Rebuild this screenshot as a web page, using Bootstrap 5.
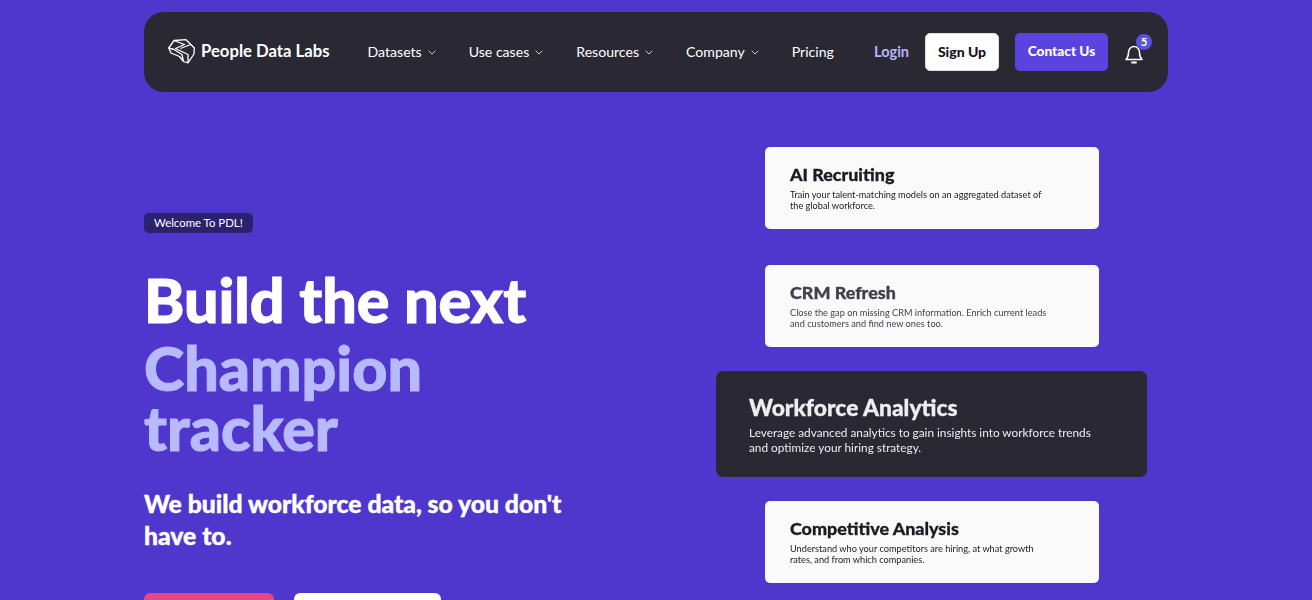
<!DOCTYPE html>
<html lang="en">
<head>
<meta charset="utf-8">
<title>People Data Labs</title>
<link href="https://cdn.jsdelivr.net/npm/bootstrap@5.3.0/dist/css/bootstrap.min.css" rel="stylesheet">
<style>
html,body{height:100%;overflow:hidden}
body{background:#4f36cc;font-family:Lato,"Liberation Sans",sans-serif;color:#fff}
.shell{width:1024px;margin:0 auto;padding-top:12px}
.topbar{height:80px;background:#2a2833;border-radius:20px;padding:0 21px 0 24px}
.brand-name{font-size:16.7px;font-weight:700;color:#fff;margin-left:-2px;padding-bottom:1px}
.menu-link{font-size:14.1px;color:#fff;text-decoration:none;display:inline-flex;align-items:center;gap:6px;padding-bottom:1px}
.menu-link svg{display:block;margin-top:2px}
.login-link{font-size:14.5px;font-weight:700;color:#b4b6ff;text-decoration:none;padding-bottom:1px}
.btn-signup{background:#fff;color:#14121c;font-size:14px;font-weight:900;padding:0 0 2px;width:74px;height:38px;border-radius:5px;border:1px solid #ddd}
.btn-contact{background:#5b43e0;color:#fff;font-size:13.7px;font-weight:900;padding:0 0 2px;width:93px;height:38px;border-radius:5px;border:0}
.bell-wrap{width:22px;height:24px;margin-left:17px}
.bell-count{top:-6px;left:11px;width:16px;height:16px;border-radius:50%;background:#5b53e0;font-size:11.5px;font-weight:700;line-height:16px;text-align:center;color:#fff}
.hero-left{width:572px;padding-top:117px}
.welcome{background:#2a226f;font-size:11.4px;font-weight:400;padding:0 10px;height:20px;line-height:20px;border-radius:5px;color:#fff}
.hero-title{font-size:61px;font-weight:900;line-height:60px;margin:37px 0 0;color:#fff;-webkit-text-stroke:1px currentColor}
.hero-accent{color:#b8baff;display:block;width:340px;margin-top:8px}
.hero-sub{font-size:24.7px;font-weight:900;line-height:32px;margin:30px 0 0;width:440px;-webkit-text-stroke:.4px currentColor}
.hero-actions{margin-top:41px;gap:20px}
.cta-pink{background:#e2498a;width:130px;height:48px;border-radius:6px;border:0}
.cta-white{background:#fff;width:147px;height:48px;border-radius:6px;border:0}
.hero-right{width:431px;padding-top:55px}
.use-card{width:334px;height:82px;background:#fafafa;border-radius:5px;padding:17px 25px 0;border:0;color:#1c1a24;will-change:transform}
.use-card h3{font-size:17.9px;font-weight:900;line-height:20px;margin:0 0 5px;color:inherit;-webkit-text-stroke:.3px currentColor}
.use-card p{font-size:9.2px;line-height:11px;margin:0;width:262px;color:inherit}
.use-card.dim{color:#413f4b}
.use-card.active{width:431px;height:106px;background:#2a2833;border-radius:7px;padding:24px 33px 0;color:#eee}
.use-card.active h3{font-size:22.800px;line-height:24px;margin:0 0 6px}
.use-card.active p{font-size:11.8px;line-height:15px;width:360px}
.gap-big{margin-bottom:36px}
.gap-small{margin-bottom:24px}
</style>
</head>
<body>
<div class="shell">
  <nav class="topbar d-flex align-items-center">
    <a class="d-flex align-items-center gap-2 text-decoration-none" href="#" style="margin-right:38px">
      <svg width="27" height="25" viewBox="0 0 27 25" fill="none" stroke="#fff" stroke-width="1.3" stroke-linejoin="round"><path d="M.7 9 6 1.500 18 .7 26.300 9 26 15 20 23.800 15.500 22.500 11.500 17.500 3 14Z"/><path d="M6 1.500 16.500 5.500 7.500 9.500 20 15.500 20 23.800M.7 9 6 10.500 14 15.500 15.500 22.500M22.500 5.500 12.500 9.500"/></svg>
      <span class="brand-name">People Data Labs</span>
    </a>
    <div class="d-flex align-items-center" style="gap:33px">
      <a class="menu-link" href="#">Datasets <svg width="8" height="5" viewBox="0 0 8 5" fill="none" stroke="#ccc" stroke-width="1"><path d="M.7.7 4 4 7.300.7"/></svg></a>
      <a class="menu-link" href="#">Use cases <svg width="8" height="5" viewBox="0 0 8 5" fill="none" stroke="#ccc" stroke-width="1"><path d="M.7.7 4 4 7.300.7"/></svg></a>
      <a class="menu-link" href="#">Resources <svg width="8" height="5" viewBox="0 0 8 5" fill="none" stroke="#ccc" stroke-width="1"><path d="M.7.7 4 4 7.300.7"/></svg></a>
      <a class="menu-link" href="#">Company <svg width="8" height="5" viewBox="0 0 8 5" fill="none" stroke="#ccc" stroke-width="1"><path d="M.7.7 4 4 7.300.7"/></svg></a>
      <a class="menu-link" href="#">Pricing</a>
    </div>
    <div class="d-flex align-items-center ms-auto">
      <a class="login-link" href="#" style="margin-right:16px">Login</a>
      <button class="btn btn-signup" type="button" style="margin-right:16px">Sign Up</button>
      <button class="btn btn-contact" type="button">Contact Us</button>
      <div class="bell-wrap position-relative">
        <svg width="18" height="20" viewBox="0 0 18 20" fill="none" stroke="#fff" stroke-width="1.5" style="margin-top:1px"><path d="M1 15.500H17C15 13.500 14.500 12 14.500 8.500 14.500 5 12 2.500 9 2.500S3.500 5 3.500 8.500C3.500 12 3 13.500 1 15.500Z" stroke-linejoin="round"/><path d="M7 18.500H11" stroke-linecap="round" stroke-width="1.800"/></svg>
        <span class="bell-count position-absolute">5</span>
      </div>
    </div>
  </nav>
  <div class="d-flex">
    <div class="hero-left">
      <span class="welcome d-inline-block">Welcome To PDL!</span>
      <h1 class="hero-title">Build the next<span class="hero-accent">Champion tracker</span></h1>
      <p class="hero-sub">We build workforce data, so you don't have to.</p>
      <div class="hero-actions d-flex">
        <button class="btn cta-pink" type="button" aria-label="Primary action"></button>
        <button class="btn cta-white" type="button" aria-label="Secondary action"></button>
      </div>
    </div>
    <div class="hero-right d-flex flex-column align-items-center">
      <div class="card use-card gap-big"><h3>AI Recruiting</h3><p>Train your talent-matching models on an aggregated dataset of the global workforce.</p></div>
      <div class="card use-card dim gap-small"><h3>CRM Refresh</h3><p>Close the gap on missing CRM information. Enrich current leads and customers and find new ones too.</p></div>
      <div class="card use-card active gap-small"><h3>Workforce Analytics</h3><p>Leverage advanced analytics to gain insights into workforce trends and optimize your hiring strategy.</p></div>
      <div class="card use-card"><h3>Competitive Analysis</h3><p>Understand who your competitors are hiring, at what growth rates, and from which companies.</p></div>
    </div>
  </div>
</div>
<script src="https://cdn.jsdelivr.net/npm/bootstrap@5.3.0/dist/js/bootstrap.bundle.min.js"></script>
</body>
</html>
